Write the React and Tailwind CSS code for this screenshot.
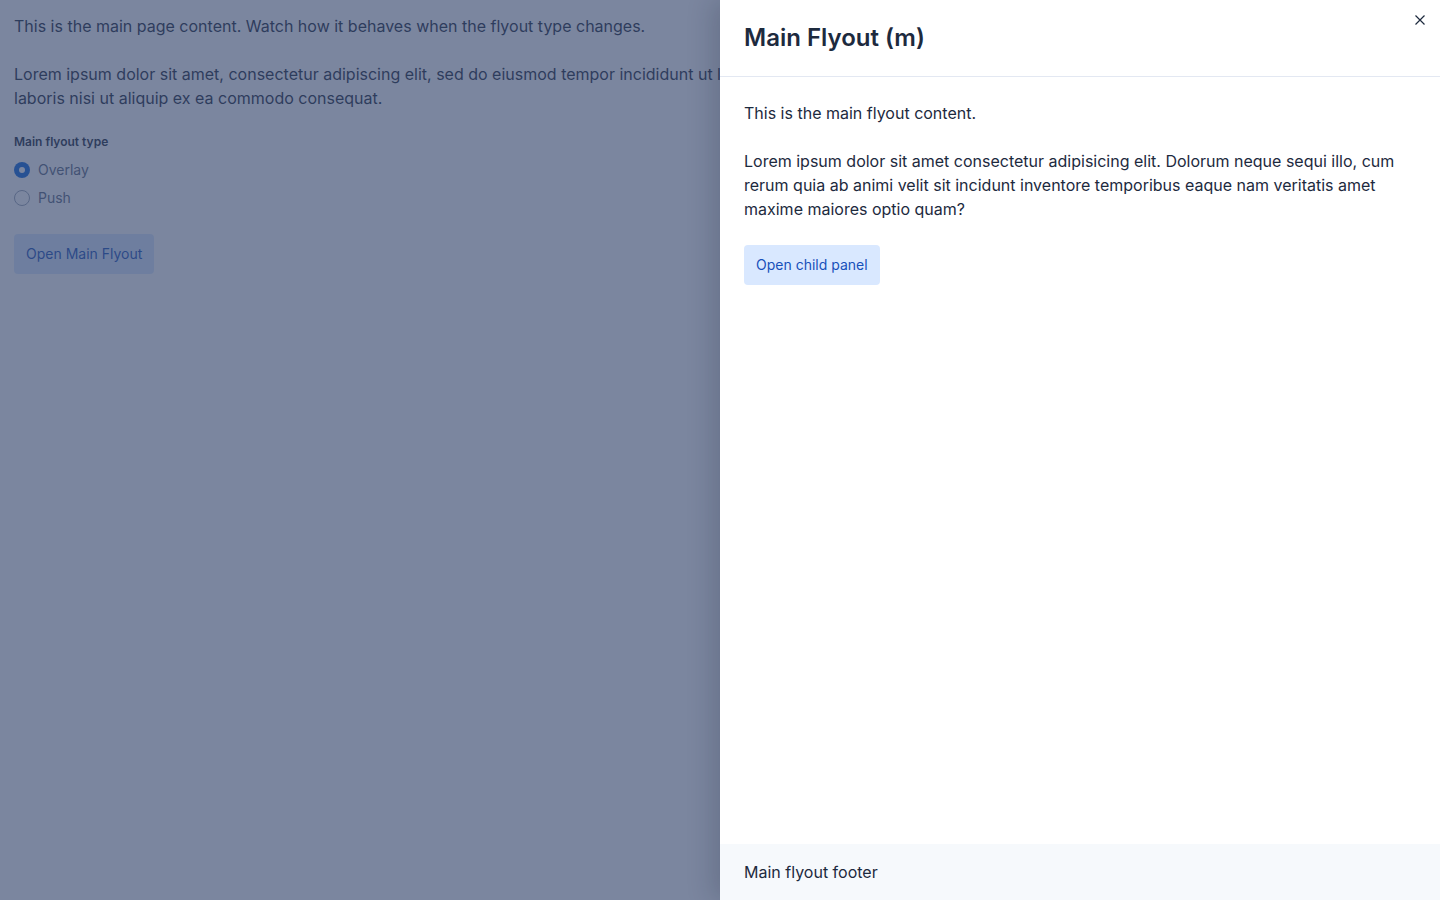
import { useState } from 'react';

function Radio({ label, checked, onChange }) {
  return (
    <label className="flex items-center gap-2 h-7 cursor-pointer">
      <span
        className={`w-4 h-4 rounded-full flex items-center justify-center ${
          checked ? 'bg-[#0b64dd]' : 'bg-white border border-[#98a2b3]'
        }`}
        onClick={onChange}
      >
        {checked && <span className="w-1.5 h-1.5 rounded-full bg-white" />}
      </span>
      <span className="text-sm text-[#5a6882]">{label}</span>
    </label>
  );
}

export default function App() {
  const [tipo, setTipo] = useState('overlay');
  const [abierto, setAbierto] = useState(true);

  return (
    <div className="relative w-full h-[900px] overflow-hidden bg-white" style={{ fontFamily: 'Inter, "Noto Sans", sans-serif' }}>
      {/* contenido de la pagina */}
      <div className="p-[14px] text-base leading-6 text-[#1d2a3e]">
        <p>This is the main page content. Watch how it behaves when the flyout type changes.</p>
        <p className="mt-6 whitespace-nowrap">
          Lorem ipsum dolor sit amet, consectetur adipiscing elit, sed do eiusmod tempor incididunt ut labore et dolore magna aliqua. Ut enim ad minim veniam, quis nostrud exercitation ullamco
        </p>
        <p>laboris nisi ut aliquip ex ea commodo consequat.</p>

        <div className="mt-6">
          <div className="text-xs font-semibold leading-4 text-[#1d2a3e]">Main flyout type</div>
          <div className="mt-1.5">
            <Radio label="Overlay" checked={tipo === 'overlay'} onChange={() => setTipo('overlay')} />
            <Radio label="Push" checked={tipo === 'push'} onChange={() => setTipo('push')} />
          </div>
        </div>

        <button
          onClick={() => setAbierto(true)}
          className="mt-[22px] h-10 px-3 rounded bg-[#d9e8ff] text-sm text-[#1750ba]"
        >
          Open Main Flyout
        </button>
      </div>

      {abierto && (
        <>
          {/* mascara */}
          <div className="absolute inset-0 bg-[rgba(55,72,110,0.66)]" />

          {/* flyout */}
          <div className="absolute top-0 right-0 bottom-0 w-[720px] bg-white flex flex-col shadow-[-8px_0_24px_rgba(20,30,50,0.18)]">
            <button
              onClick={() => setAbierto(false)}
              className="absolute top-3 right-3 w-4 h-4 flex items-center justify-center text-[#1d2a3e]"
            >
              <svg width="16" height="16" viewBox="0 0 16 16" fill="none" stroke="currentColor" strokeWidth="1.2">
                <path d="M3.5 3.5l9 9M12.5 3.5l-9 9" />
              </svg>
            </button>

            <div className="px-6 h-[77px] flex items-center border-b border-[#e3e8f2]">
              <h2 className="text-2xl font-semibold leading-8 text-[#1d2a3e]">Main Flyout (m)</h2>
            </div>

            <div className="flex-1 px-6 pt-6 text-base leading-6 text-[#1d2a3e]">
              <p>This is the main flyout content.</p>
              <p className="mt-6">
                Lorem ipsum dolor sit amet consectetur adipisicing elit. Dolorum neque sequi illo, cum rerum quia ab animi velit sit incidunt inventore temporibus eaque nam veritatis amet maxime maiores optio quam?
              </p>
              <button className="mt-6 h-10 px-3 rounded bg-[#d9e8ff] text-sm text-[#1750ba]">
                Open child panel
              </button>
            </div>

            <div className="h-14 px-6 flex items-center bg-[#f6f9fc] text-base text-[#1d2a3e]">
              Main flyout footer
            </div>
          </div>
        </>
      )}
    </div>
  );
}
